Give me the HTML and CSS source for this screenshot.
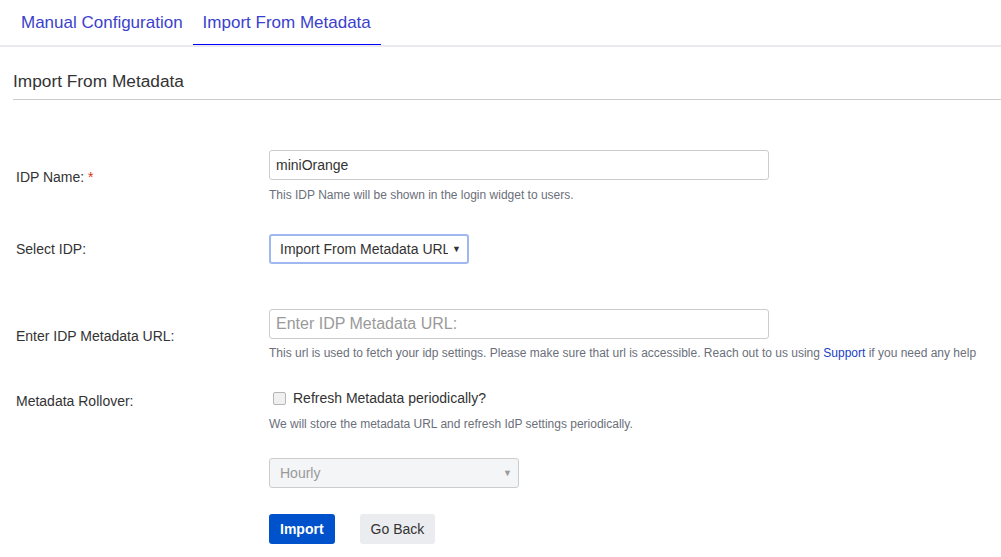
FILE: index.html
```
<!DOCTYPE html>
<html lang="en">
<head>
    <meta charset="UTF-8">
    <title>Import From Metadata</title>
    <link rel="stylesheet" href="styles.css">
</head>
<body>
    <div class="tabs">
        <a class="tab">Manual Configuration</a>
        <a class="tab active">Import From Metadata</a>
    </div>
    <div class="section">
        <h2 class="section-title">Import From Metadata</h2>
        <div class="form">
            <div class="row row-name">
                <label class="label">IDP Name: <span class="req">*</span></label>
                <div class="field">
                    <input class="text-input" type="text" value="miniOrange">
                    <div class="help">This IDP Name will be shown in the login widget to users.</div>
                </div>
            </div>
            <div class="row row-select">
                <label class="label">Select IDP:</label>
                <div class="field">
                    <div class="select focused">
                        <span class="select-text">Import From Metadata URL</span>
                        <span class="arrow">&#9660;</span>
                    </div>
                </div>
            </div>
            <div class="row row-url">
                <label class="label">Enter IDP Metadata URL:</label>
                <div class="field">
                    <input class="text-input" type="text" placeholder="Enter IDP Metadata URL:">
                    <div class="help">This url is used to fetch your idp settings. Please make sure that url is accessible. Reach out to us using <a class="link">Support</a> if you need any help</div>
                </div>
            </div>
            <div class="row row-rollover">
                <label class="label">Metadata Rollover:</label>
                <div class="field">
                    <label class="check"><span class="checkbox"></span>Refresh Metadata periodically?</label>
                    <div class="help">We will store the metadata URL and refresh IdP settings periodically.</div>
                </div>
            </div>
            <div class="row row-interval">
                <div class="label"></div>
                <div class="field">
                    <div class="select disabled">
                        <span class="select-text">Hourly</span>
                        <span class="arrow">&#9660;</span>
                    </div>
                </div>
            </div>
            <div class="row row-buttons">
                <div class="label"></div>
                <div class="field buttons">
                    <button class="btn btn-primary">Import</button>
                    <button class="btn btn-default">Go Back</button>
                </div>
            </div>
        </div>
    </div>
</body>
</html>
```

FILE: styles.css
```
body {
    margin: 0;
    font-family: "Liberation Sans", Arial, sans-serif;
    color: #333;
    background-color: #fff;
}
.tabs {
    display: flex;
    height: 45px;
    padding-left: 11px;
    border-bottom: 2px solid #e9e9ee;
}
.tab {
    display: block;
    padding: 0 10px;
    font-size: 17px;
    line-height: 45px;
    color: #3b3fcd;
    cursor: pointer;
}
.tab.active {
    height: 44px;
    border-bottom: 1px solid #0000ff;
}
.section {
    padding: 0 0 0 13px;
}
.section-title {
    margin: 0;
    padding: 24px 0 8px;
    font-size: 17.3px;
    font-weight: normal;
    line-height: 20px;
    color: #333;
    border-bottom: 1px solid #ccc;
}
.form {
    padding: 50px 0 0 3px;
}
.row {
    display: flex;
    align-items: center;
}
.label {
    width: 253px;
    flex-shrink: 0;
    font-size: 14px;
    line-height: 16px;
    color: #333;
}
.req {
    color: #de350b;
}
.field {
    width: 732px;
}
.text-input {
    display: block;
    box-sizing: border-box;
    width: 500px;
    height: 30px;
    margin: 0;
    padding: 0 6px;
    font-family: "Liberation Sans", Arial, sans-serif;
    font-size: 14px;
    color: #333;
    border: 1px solid #ccc;
    border-radius: 3px;
    outline: none;
}
.text-input::placeholder {
    font-size: 16px;
    color: #9a9a9a;
}
.help {
    margin-top: 6px;
    font-size: 12px;
    line-height: 18px;
    color: #6b6f7a;
}
.link {
    color: #1a3fc4;
    cursor: pointer;
}
.select {
    display: flex;
    align-items: center;
    justify-content: space-between;
    box-sizing: border-box;
    width: 200px;
    height: 30px;
    padding: 0 6px 0 10px;
    font-size: 14px;
    border: 1px solid #ccc;
    border-radius: 3px;
}
.select-text {
    white-space: nowrap;
    overflow: hidden;
    width: 168px;
}
.arrow {
    font-size: 9px;
    color: #333;
}
.select.focused {
    border: 2px solid #9fb9f0;
    padding-left: 9px;
}
.select.disabled {
    width: 250px;
    background-color: #f4f5f7;
    color: #999;
}
.select.disabled .arrow {
    color: #999;
}
.row-name {
    height: 54px;
}
.row-select {
    margin-top: 30px;
}
.row-url {
    margin-top: 45px;
}
.row-url .help {
    margin-top: 5px;
}
.row-rollover {
    align-items: flex-start;
    margin-top: 25px;
}
.row-rollover .label {
    padding-top: 6px;
}
.check {
    display: flex;
    align-items: center;
    height: 22px;
    font-size: 14px;
    color: #333;
}
.checkbox {
    display: inline-block;
    width: 11px;
    height: 11px;
    margin: 0 7px 0 4px;
    background-color: #f0f0f0;
    border: 1px solid #b5b5b5;
    border-radius: 2px;
}
.row-rollover .help {
    margin-top: 6px;
}
.row-interval {
    margin-top: 25px;
}
.row-buttons {
    margin-top: 26px;
}
.buttons {
    display: flex;
    gap: 25px;
}
.btn {
    height: 30px;
    padding: 0 11px;
    font-family: "Liberation Sans", Arial, sans-serif;
    font-size: 14px;
    border: none;
    border-radius: 3px;
    cursor: pointer;
}
.btn-primary {
    background-color: #0052cc;
    color: #fff;
    font-weight: bold;
}
.btn-default {
    background-color: #ebecf0;
    color: #333;
}
```
